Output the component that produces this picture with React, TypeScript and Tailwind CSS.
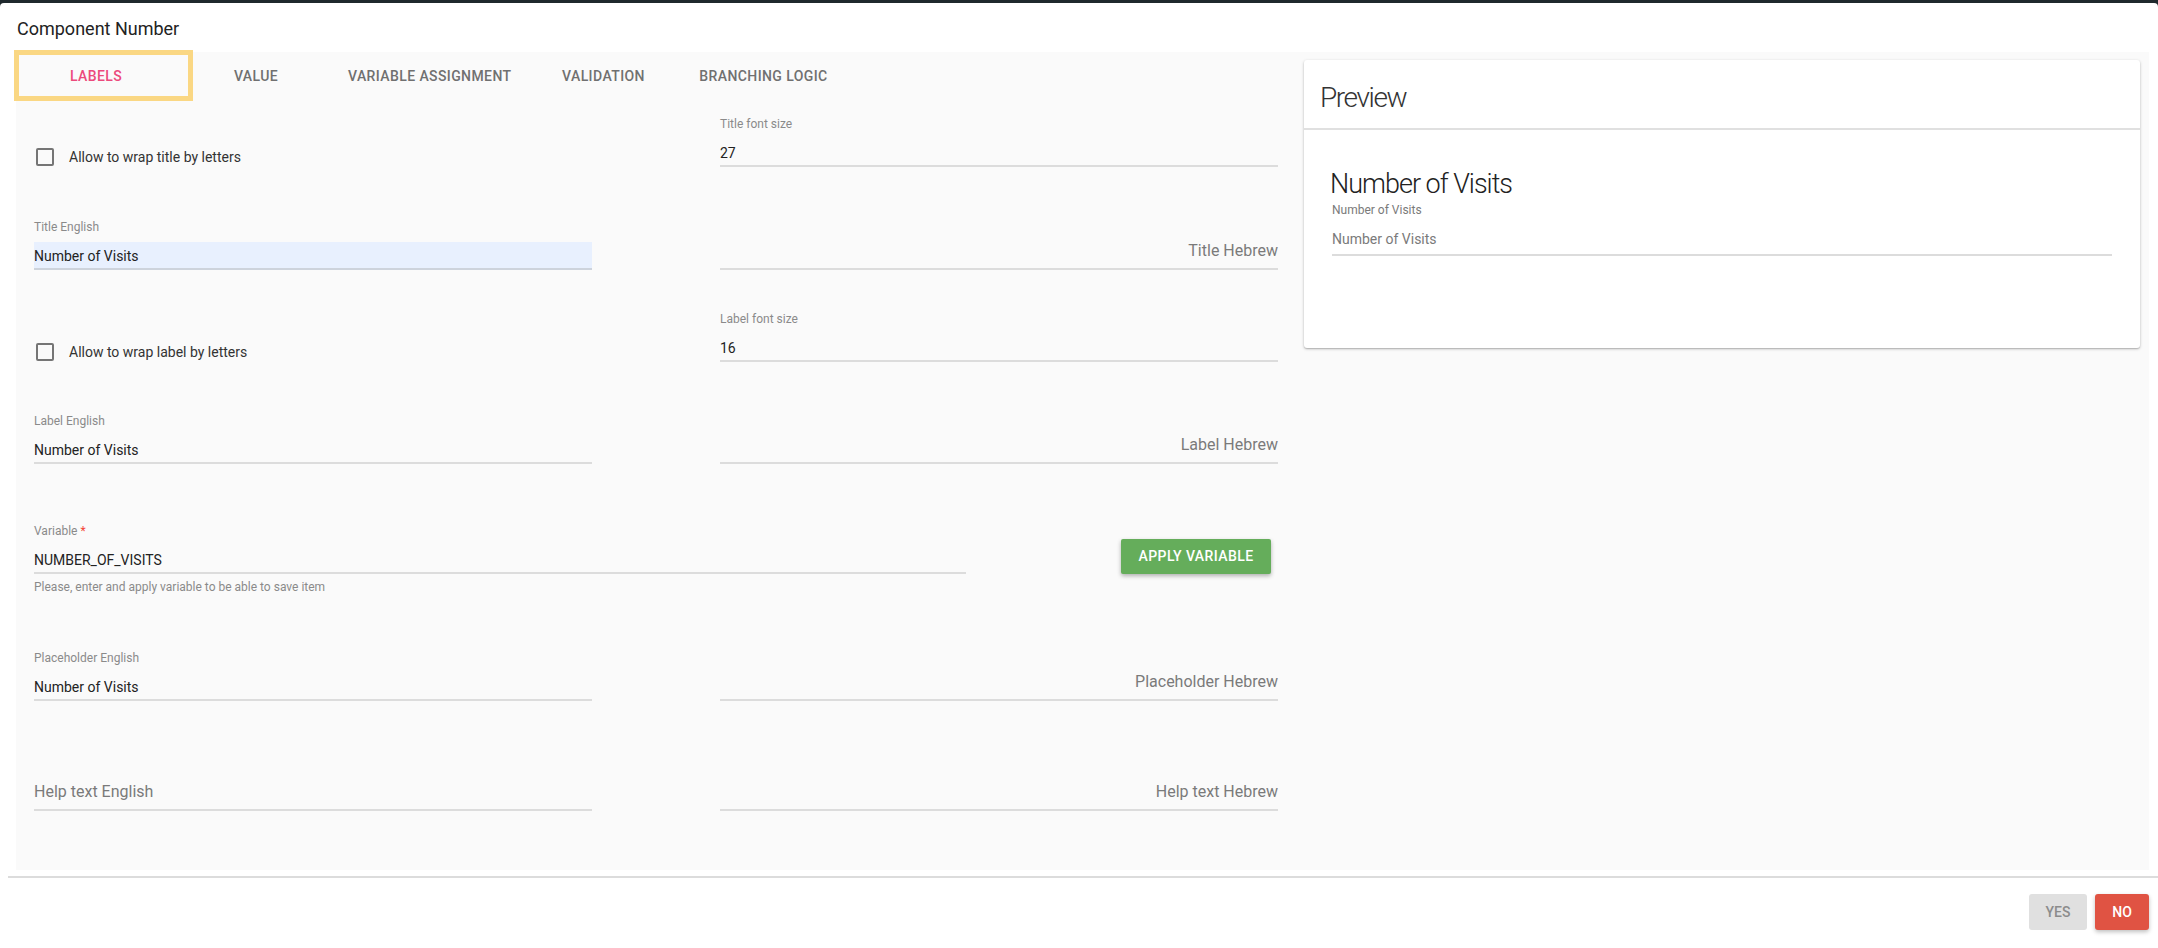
import React from 'react';

const font = { fontFamily: 'Roboto, "Liberation Sans", sans-serif' };
const thin = { fontFamily: '"Roboto Light", "Lato Light", Lato, Roboto, sans-serif' };

const tabs = ['LABELS', 'VALUE', 'VARIABLE ASSIGNMENT', 'VALIDATION', 'BRANCHING LOGIC'];

type FieldProps = {
  label?: React.ReactNode;
  value?: string;
  placeholder?: string;
  rtl?: boolean;
  autofill?: boolean;
};

const Field = ({ label, value, placeholder, rtl, autofill }: FieldProps) => (
  <div className="flex flex-col">
    <div className="h-[14px] text-[12px] leading-[14px] text-[#8a8a8a]">{label}</div>
    {value !== undefined ? (
      <div
        className={`mt-[8px] h-[28px] border-b-2 pt-[4px] text-[14px] leading-[20px] text-[#222] ${
          autofill ? 'bg-[#e8f0fe] border-[#cdd3dc]' : 'border-[#dcdcdc]'
        }`}
      >
        {value}
      </div>
    ) : (
      <div
        className={`mt-[8px] h-[28px] border-b-2 border-[#dcdcdc] text-[16px] leading-[18px] text-[#7a7a7a] ${
          rtl ? 'text-right' : ''
        }`}
      >
        {placeholder}
      </div>
    )}
  </div>
);

const CheckRow = ({ text }: { text: string }) => (
  <div className="mt-[31px] flex items-center h-[18px]">
    <span className="ml-[2px] w-[18px] h-[18px] rounded-[2px] border-2 border-[#757575]" />
    <span className="ml-[15px] text-[14px] text-[#333]">{text}</span>
  </div>
);

export default function App() {
  return (
    <div className="min-h-screen bg-[#1f292d] pt-[3px]" style={font}>
      <div className="h-[945px] bg-white rounded-t-[4px] flex flex-col">
        {/* Dialog title */}
        <div className="h-[49px] pl-[17px] pt-[15px] text-[18px] leading-[22px] text-[#222]">
          Component Number
        </div>

        {/* Main panel */}
        <div className="ml-[16px] w-[2133px] h-[818px] bg-[#fafafa] flex">
          <div className="w-[1279px] flex flex-col">
            {/* Tabs */}
            <div className="relative h-[48px] flex">
              {tabs.map((t, i) => (
                <div
                  key={t}
                  className={`min-w-[160px] px-[12px] h-[48px] flex items-center justify-center text-[14px] font-medium tracking-[0.4px] ${
                    i === 0 ? 'text-[#ec4a7c]' : 'text-[#707070]'
                  }`}
                >
                  {t}
                </div>
              ))}
              <div className="absolute left-[-2px] top-[-2px] w-[179px] h-[51px] border-[5px] border-[#fad783]" />
            </div>

            {/* Form */}
            <div className="pl-[18px] pr-[17px] flex flex-col">
              <div className="mt-[17px] grid grid-cols-[558px_558px] gap-x-[128px]">
                <CheckRow text="Allow to wrap title by letters" />
                <Field label="Title font size" value="27" />
              </div>

              <div className="mt-[53px] grid grid-cols-[558px_558px] gap-x-[128px]">
                <Field label="Title English" value="Number of Visits" autofill />
                <Field placeholder="Title Hebrew" rtl />
              </div>

              <div className="mt-[42px] grid grid-cols-[558px_558px] gap-x-[128px]">
                <CheckRow text="Allow to wrap label by letters" />
                <Field label="Label font size" value="16" />
              </div>

              <div className="mt-[52px] grid grid-cols-[558px_558px] gap-x-[128px]">
                <Field label="Label English" value="Number of Visits" />
                <Field placeholder="Label Hebrew" rtl />
              </div>

              <div className="mt-[60px] flex">
                <div className="w-[932px] flex flex-col">
                  <Field
                    label={
                      <span>
                        Variable <span className="text-[#f44336]">*</span>
                      </span>
                    }
                    value="NUMBER_OF_VISITS"
                  />
                  <div className="mt-[6px] text-[12px] leading-[14px] text-[#8a8a8a]">
                    Please, enter and apply variable to be able to save item
                  </div>
                </div>
                <div className="flex-1 flex justify-end pr-[7px] pt-[15px]">
                  <button className="w-[150px] h-[35px] rounded-[2px] bg-[#65ad5b] text-white text-[14px] font-medium tracking-[0.4px] shadow-[0_2px_4px_rgba(0,0,0,0.3)]">
                    APPLY VARIABLE
                  </button>
                </div>
              </div>

              <div className="mt-[57px] grid grid-cols-[558px_558px] gap-x-[128px]">
                <Field label="Placeholder English" value="Number of Visits" />
                <Field placeholder="Placeholder Hebrew" rtl />
              </div>

              <div className="mt-[60px] grid grid-cols-[558px_558px] gap-x-[128px]">
                <Field placeholder="Help text English" />
                <Field placeholder="Help text Hebrew" rtl />
              </div>
            </div>
          </div>

          {/* Preview */}
          <div className="flex-1 pt-[8px] pl-[9px] pr-[9px]">
            <div className="h-[288px] bg-white rounded-[3px] shadow-[0_1px_3px_rgba(0,0,0,0.25),0_1px_1px_rgba(0,0,0,0.12)] flex flex-col">
              <div
                className="h-[70px] border-b-2 border-[#e0e0e0] pl-[16px] pt-[22px] text-[28px] leading-[32px] font-light tracking-[-1.4px] text-[#333]"
                style={thin}
              >
                Preview
              </div>
              <div className="pl-[26px] pr-[28px] pt-[38px] flex flex-col">
                <div className="text-[27px] leading-[32px] font-light tracking-[-1px] text-[#222]" style={thin}>
                  Number of Visits
                </div>
                <div className="mt-[3px] ml-[2px] text-[12px] leading-[14px] text-[#7a7a7a]">Number of Visits</div>
                <div className="mt-[12px] ml-[2px] h-[27px] border-b-2 border-[#dcdcdc] text-[14px] leading-[20px] text-[#7a7a7a]">
                  Number of Visits
                </div>
              </div>
            </div>
          </div>
        </div>

        {/* Footer */}
        <div className="mt-[6px] ml-[8px] border-t-2 border-[#dcdcdc]" />
        <div className="mt-[16px] flex justify-end gap-[8px] pr-[9px]">
          <button className="w-[58px] h-[36px] rounded-[3px] bg-[#e0e0e0] text-[#8c8c8c] text-[14px] font-medium">
            YES
          </button>
          <button className="w-[54px] h-[36px] rounded-[3px] bg-[#e05343] text-white text-[14px] font-medium shadow-[0_2px_4px_rgba(0,0,0,0.25)]">
            NO
          </button>
        </div>
      </div>
    </div>
  );
}
